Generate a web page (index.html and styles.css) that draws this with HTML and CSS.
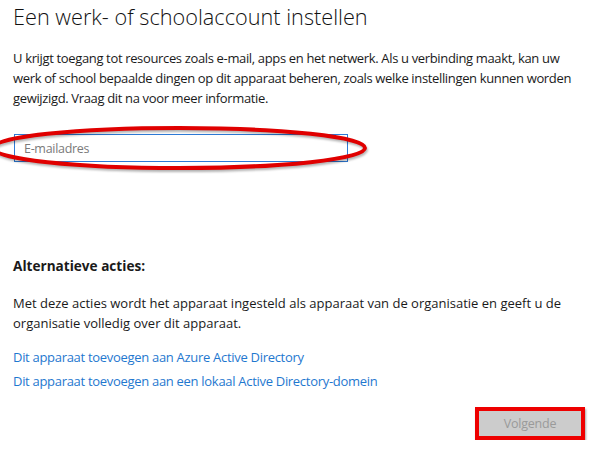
FILE: index.html
```
<!DOCTYPE html>
<html>
<head>
	<title>Werk- of schoolaccount</title>
	<link rel="stylesheet" href="styles.css">
</head>
<body>
	<div class="page">
		<h1 class="title">Een werk- of schoolaccount instellen</h1>
		<p class="intro">U krijgt toegang tot resources zoals e-mail, apps en het netwerk. Als u verbinding maakt, kan uw<br>werk of school bepaalde dingen op dit apparaat beheren, zoals welke instellingen kunnen worden<br>gewijzigd. Vraag dit na voor meer informatie.</p>

		<div class="email-wrap">
			<input class="email" type="text" placeholder="E-mailadres">
			<svg class="ring" width="384" height="50" viewBox="0 0 384 50">
				<ellipse cx="183" cy="25" rx="186" ry="20" fill="none" stroke="#e00000" stroke-width="4"/>
			</svg>
		</div>

		<h2 class="alt-title">Alternatieve acties:</h2>
		<p class="alt-text">Met deze acties wordt het apparaat ingesteld als apparaat van de organisatie en geeft u de<br>organisatie volledig over dit apparaat.</p>

		<ul class="links">
			<li><a href="#">Dit apparaat toevoegen aan Azure Active Directory</a></li>
			<li><a href="#">Dit apparaat toevoegen aan een lokaal Active Directory-domein</a></li>
		</ul>

		<div class="footer">
			<div class="mark">
				<button class="next" disabled>Volgende</button>
			</div>
		</div>
	</div>
</body>
</html>
```

FILE: styles.css
```
body {
	margin: 0;
	background: #fff;
	color: #1a1a1a;
	font-family: "Open Sans", sans-serif;
}

.page {
	padding: 0 7px 0 13px;
}

.title {
	margin: 0;
	padding-top: 2px;
	font-size: 21.7px;
	font-weight: 300;
	line-height: 30px;
	color: #111;
}

.intro {
	margin: 16px 0 0;
	font-size: 13px;
	letter-spacing: -0.35px;
	line-height: 20px;
	white-space: nowrap;
}

.email-wrap {
	position: relative;
	margin-top: 26px;
	width: 334px;
}

.email {
	display: block;
	box-sizing: border-box;
	width: 334px;
	height: 28px;
	margin: 0 0 0 1px;
	padding: 0 9px;
	border: 1px solid #2d7ad6;
	font-family: inherit;
	font-size: 12.5px;
	letter-spacing: -0.3px;
	color: #222;
	outline: none;
}

.email::placeholder {
	color: #7a7a7a;
}

.ring {
	position: absolute;
	left: -17px;
	top: -11px;
	filter: drop-shadow(1px 2px 1px rgba(0, 0, 0, 0.3));
}

.alt-title {
	margin: 94px 0 0;
	font-size: 13.6px;
	font-weight: 700;
	line-height: 20px;
}

.alt-text {
	margin: 17px 0 0;
	font-size: 13px;
	line-height: 20px;
	white-space: nowrap;
}

.links {
	list-style: none;
	margin: 14px 0 0;
	padding: 0;
	font-size: 13px;
	letter-spacing: -0.3px;
	line-height: 20px;
}

.links li {
	margin-bottom: 4px;
}

.links a {
	color: #1f78cf;
	text-decoration: none;
}

.footer {
	display: flex;
	justify-content: flex-end;
	margin-top: 16px;
}

.mark {
	border: 4px solid #ee0000;
	box-shadow: 1px 2px 2px rgba(0, 0, 0, 0.35);
}

.next {
	display: block;
	width: 102px;
	height: 25px;
	border: none;
	background: #cccccc;
	color: #9a9a9a;
	font-family: inherit;
	font-size: 12.5px;
	letter-spacing: -0.2px;
}
```
